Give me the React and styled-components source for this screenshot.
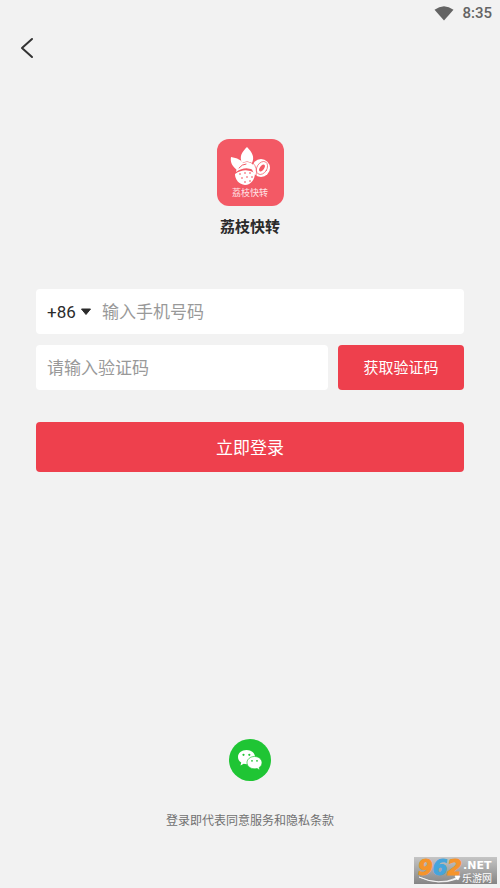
import React, { useState } from "react";
import styled, { createGlobalStyle } from "styled-components";

const GlobalStyle = createGlobalStyle`
  *, *::before, *::after { box-sizing: border-box; }
  body { margin: 0; background: #f2f2f2; }
  body, button, input, select {
    font-family: Roboto, "Noto Sans CJK SC", sans-serif;
  }
`;

const Page = styled.div`
  position: relative;
  display: flex;
  flex-direction: column;
  min-height: 100vh;
  background: #f2f2f2;
  color: #2b2b2b;
`;

const StatusBar = styled.div`
  display: flex;
  align-items: center;
  justify-content: flex-end;
  gap: 8px;
  height: 26px;
  padding: 0 8px;
  color: #646464;
  font-size: 15px;
  font-weight: 500;
`;

const NavBar = styled.header`
  display: flex;
  align-items: center;
  height: 44px;
  padding: 0 12px;
`;

const IconButton = styled.button`
  display: flex;
  align-items: center;
  justify-content: center;
  width: 30px;
  height: 30px;
  padding: 0;
  border: 0;
  background: none;
  color: #333;
  cursor: pointer;
`;

const Brand = styled.section`
  display: flex;
  flex-direction: column;
  align-items: center;
  gap: 10px;
  padding-top: 69px;
`;

const AppLogo = styled.div`
  display: flex;
  flex-direction: column;
  align-items: center;
  gap: 1px;
  width: 67px;
  height: 67px;
  padding-top: 8px;
  border-radius: 12px;
  background: #f35965;
  color: #ffe3e5;
  font-size: 9px;
  line-height: 12px;
`;

const AppName = styled.h1`
  margin: 0;
  font-size: 15px;
  font-weight: 700;
  line-height: 22px;
`;

const Form = styled.form`
  display: flex;
  flex-direction: column;
  gap: 11px;
  padding: 51px 36px 0;
`;

const Row = styled.div`
  display: flex;
  gap: 10px;
`;

const Field = styled.div`
  display: flex;
  flex: 1;
  align-items: center;
  min-width: 0;
  height: 45px;
  padding: 0 11px;
  border-radius: 4px;
  background: #fff;
`;

const CodePicker = styled.label`
  display: flex;
  align-items: center;
  gap: 4px;
  margin-right: 10px;
`;

const CodeSelect = styled.select`
  width: 29px;
  height: 30px;
  padding: 0;
  border: 0;
  outline: 0;
  appearance: none;
  background: none;
  color: #2b2b2b;
  font-size: 17px;
`;

const TextInput = styled.input`
  flex: 1;
  min-width: 0;
  height: 30px;
  padding: 0;
  border: 0;
  outline: 0;
  background: none;
  color: #2b2b2b;
  font-size: 17px;

  &::placeholder { color: #999; opacity: 1; }
`;

const Button = styled.button`
  padding: 0 0 2px;
  border: 0;
  border-radius: 4px;
  background: #ee404d;
  color: #fff;
  cursor: pointer;
`;

const CodeButton = styled(Button)`
  width: 126px;
  height: 45px;
  font-size: 15px;
`;

const LoginButton = styled(Button)`
  height: 50px;
  margin-top: 21px;
  font-size: 17px;
`;

const Footer = styled.footer`
  display: flex;
  flex-direction: column;
  align-items: center;
  gap: 30px;
  margin-top: auto;
  padding: 40px 0 57px;
`;

const WechatButton = styled(IconButton)`
  width: 42px;
  height: 42px;
  border-radius: 50%;
  background: #1fc534;
`;

const Terms = styled.a`
  color: #707070;
  font-size: 12px;
  line-height: 20px;
  text-decoration: none;
`;

const Watermark = styled.div`
  position: absolute;
  right: 3px;
  bottom: 4px;
  width: 83px;
  height: 27px;

  svg { display: block; overflow: visible; }
`;

function WifiIcon() {
  return (
    <svg width="20" height="15" viewBox="0 0 20 15" aria-hidden="true">
      <path d="M.5 3.8Q10-3.5 19.500 3.800L10 14.500Z" fill="currentColor" />
    </svg>
  );
}

function BackIcon() {
  return (
    <svg width="14" height="22" viewBox="0 0 14 22" fill="none" aria-hidden="true">
      <path d="M12 2L2 11L12 20" stroke="currentColor" strokeWidth="2" strokeLinecap="round" strokeLinejoin="round" />
    </svg>
  );
}

function CaretIcon() {
  return (
    <svg width="12" height="8" viewBox="0 0 12 8" aria-hidden="true">
      <path d="M1.500 1H10.500L6 6.500Z" fill="#2b2b2b" stroke="#2b2b2b" strokeLinejoin="round" />
    </svg>
  );
}

function LycheeIcon() {
  return (
    <svg width="40" height="39" viewBox="0 0 40 39" aria-hidden="true">
      <g fill="#fff">
        <path d="M7 23C2 19 0 15 1 10C7 11 12 13 13 17C10 18 8 20 7 23Z" />
        <path d="M12 16C9 9 12 5 17 0C22 5 25 10 22 16C18 14 15 14 12 16Z" />
        <path d="M6 25C7 19 12 15 17 15C22 15 25 19 25 24Q16 18 6 25Z" />
        <path d="M5 27Q15 20 25 26C25 32 21 38 15 38C9 37 5 33 5 27Z" />
        <ellipse cx="31" cy="21" rx="9" ry="9" />
      </g>
      <g fill="none" stroke="#f35965" strokeWidth="1" strokeLinecap="round">
        <path d="M9 21Q12 17 16 17" />
        <ellipse cx="32" cy="21" rx="5" ry="7" strokeWidth=".7" transform="rotate(32 32 21)" />
        <path d="M23 16Q28 21 26 29" strokeWidth=".7" />
      </g>
      <ellipse cx="32" cy="21" rx="2" ry="4" fill="#f35965" transform="rotate(35 32 21)" />
      <g fill="#f78d96">
        <circle cx="10" cy="27" r="1" /><circle cx="15" cy="26" r="1" /><circle cx="20" cy="26" r="1" />
        <circle cx="12" cy="31" r="1" /><circle cx="17" cy="30" r="1" /><circle cx="22" cy="30" r="1" />
        <circle cx="15" cy="35" r="1" /><circle cx="20" cy="34" r="1" />
      </g>
    </svg>
  );
}

function WechatIcon() {
  return (
    <svg width="26" height="22" viewBox="0 0 26 22" aria-hidden="true">
      <path d="M9.500 1C4.500 1 1 4 1 8C1 10.500 2.200 12.300 4.200 13.600L3.500 16.500L6.700 14.800Q8 15.200 9.500 15.200C14.500 15.200 18 12 18 8S14.500 1 9.500 1Z" fill="#fff" />
      <path d="M17.500 7.500C13.300 7.500 10 10.200 10 13.700S13.300 19.800 17.500 19.800Q18.900 19.800 20 19.500L22.800 21L22.200 18.500C24 17.300 25 15.600 25 13.700C25 10.200 21.700 7.500 17.500 7.500Z" fill="#fff" stroke="#1fc534" strokeWidth=".7" />
      <g fill="#1fc534">
        <circle cx="6.500" cy="5.800" r="1.100" /><circle cx="12.300" cy="5.800" r="1.100" />
        <circle cx="15" cy="11.800" r=".9" /><circle cx="20" cy="11.800" r=".9" />
      </g>
    </svg>
  );
}

function SiteMark() {
  return (
    <svg width="83" height="27" viewBox="0 0 83 27" role="img" aria-label="962.NET 乐游网">
      <defs>
        <linearGradient id="plate" x2="0" y2="1">
          <stop offset="0" stopColor="#c5c5c5" />
          <stop offset=".5" stopColor="#a5a5a5" />
          <stop offset="1" stopColor="#858585" />
        </linearGradient>
      </defs>
      <rect width="83" height="27" fill="url(#plate)" />
      <text x="4" y="18" fontFamily="DejaVu Sans, sans-serif" fontWeight="700" fontStyle="italic" fontSize="21" strokeWidth="1">
        <tspan fill="#f5942b" stroke="#f5942b">9</tspan>
        <tspan fill="#45a5dc" stroke="#45a5dc">6</tspan>
        <tspan fill="#f5942b" stroke="#f5942b">2</tspan>
      </text>
      <path d="M5 20Q25 29 42 21L41 19L46 19L44 23L43 22Q25 29 5 20Z" fill="#fff" stroke="#fff" strokeWidth=".7" />
      <text x="49" y="12" fill="#fff" fontFamily="DejaVu Sans, sans-serif" fontWeight="700" fontSize="11">.NET</text>
      <text x="48" y="25" fill="#fff" fontFamily="Noto Sans CJK SC, sans-serif" fontSize="10">乐游网</text>
    </svg>
  );
}

export default function App() {
  const [phone, setPhone] = useState("");
  const [code, setCode] = useState("");

  return (
    <Page>
      <GlobalStyle />
      <StatusBar>
        <WifiIcon />
        <span>8:35</span>
      </StatusBar>
      <NavBar>
        <IconButton type="button" aria-label="返回">
          <BackIcon />
        </IconButton>
      </NavBar>
      <Brand>
        <AppLogo>
          <LycheeIcon />
          <span>荔枝快转</span>
        </AppLogo>
        <AppName>荔枝快转</AppName>
      </Brand>
      <Form onSubmit={(event) => event.preventDefault()}>
        <Row>
          <Field>
            <CodePicker>
              <CodeSelect aria-label="国家区号" defaultValue="+86">
                <option>+86</option>
              </CodeSelect>
              <CaretIcon />
            </CodePicker>
            <TextInput
              type="tel"
              aria-label="手机号码"
              placeholder="输入手机号码"
              value={phone}
              onChange={(event) => setPhone(event.target.value)}
            />
          </Field>
        </Row>
        <Row>
          <Field>
            <TextInput
              inputMode="numeric"
              aria-label="验证码"
              placeholder="请输入验证码"
              value={code}
              onChange={(event) => setCode(event.target.value)}
            />
          </Field>
          <CodeButton type="button">获取验证码</CodeButton>
        </Row>
        <LoginButton type="submit">立即登录</LoginButton>
      </Form>
      <Footer>
        <WechatButton type="button" aria-label="微信登录">
          <WechatIcon />
        </WechatButton>
        <Terms href="#terms">登录即代表同意服务和隐私条款</Terms>
      </Footer>
      <Watermark>
        <SiteMark />
      </Watermark>
    </Page>
  );
}
